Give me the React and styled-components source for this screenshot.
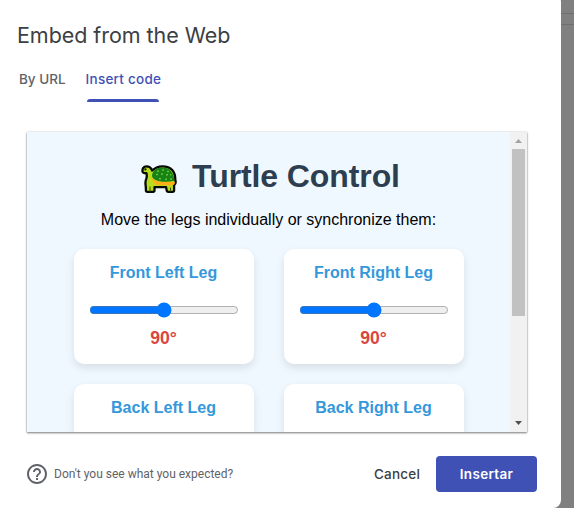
import React, { useState } from "react";
import styled, { createGlobalStyle } from "styled-components";

const GlobalStyle = createGlobalStyle`
  * { box-sizing: border-box; }
  body { margin: 0; overflow: hidden; }
`;

const Backdrop = styled.div`
  display: flex;
  width: 574px;
  height: 508px;
  overflow: hidden;
  background: linear-gradient(#808080 0 13px, #6f6f6f 13px 14px, #808080 14px 24px, #6f6f6f 24px 25px, #808080 25px);
`;

const Dialog = styled.section`
  display: flex;
  flex-direction: column;
  flex: none;
  width: 561px;
  height: 514px;
  margin-top: -6px;
  padding-top: 6px;
  background: #fff;
  border-radius: 0 8px 8px 0;
  font-family: Inter, "Liberation Sans", sans-serif;
`;

const DialogTitle = styled.h1`
  margin: 20px 0 0 17px;
  height: 30px;
  font-size: 21.5px;
  line-height: 30px;
  font-weight: 400;
  letter-spacing: -0.05px;
  color: #3c4043;
  white-space: nowrap;
`;

const TabBar = styled.nav`
  display: flex;
  gap: 20px;
  margin: 19px 0 0 19px;
  height: 33px;
`;

const Tab = styled.button`
  display: flex;
  flex-direction: column;
  justify-content: space-between;
  align-items: center;
  height: 33px;
  padding: 0;
  border: 0;
  background: none;
  font: 500 13.5px/20px Inter, sans-serif;
  letter-spacing: ${(p) => p.$tracking};
  white-space: nowrap;
  color: ${(p) => (p.$active ? "#3f51b5" : "#5f6368")};
`;

const TabIndicator = styled.span`
  width: 72px;
  height: 3px;
  margin-right: 1px;
  border-radius: 3px 3px 0 0;
  background: #3f51b5;
`;

const Preview = styled.div`
  display: flex;
  width: 500px;
  height: 300px;
  margin: 30px 0 0 27px;
  overflow: hidden;
  background: #f0f8ff;
  box-shadow: 0 1px 2px rgba(0, 0, 0, 0.5), 0 0 1px rgba(0, 0, 0, 0.25);
`;

const Page = styled.main`
  width: 483px;
  flex: none;
  display: flex;
  flex-direction: column;
  align-items: center;
  font-family: "Liberation Sans", Arial, sans-serif;
`;

const PageTitle = styled.h2`
  display: flex;
  align-items: center;
  gap: 15px;
  margin: 25px 0 0 4px;
  height: 38px;
  font-size: 32px;
  line-height: 38px;
  font-weight: 700;
  letter-spacing: -0.1px;
  color: #2c3e50;
  white-space: nowrap;

  svg { margin-top: 6px; }
`;

const Intro = styled.p`
  margin: 16px 0 0;
  font-size: 16px;
  line-height: 18px;
  color: #000;
`;

const LegGrid = styled.div`
  display: grid;
  grid-template-columns: 180px 180px;
  grid-auto-rows: 115px;
  gap: 20px 30px;
  margin-top: 20px;
`;

const LegCard = styled.article`
  display: flex;
  flex-direction: column;
  align-items: center;
  padding: 15px;
  border-radius: 10px;
  background: #fff;
  box-shadow: 0 4px 8px rgba(0, 0, 0, 0.1);
`;

const ClippedCard = styled(LegCard)`
  height: 48px;
  border-radius: 10px 10px 0 0;
`;

const LegName = styled.h3`
  margin: 0;
  font-size: 16px;
  line-height: 18px;
  color: #3498db;
`;

const AngleSlider = styled.input`
  width: 150px;
  height: 16px;
  margin: 20px 0 0;
`;

const Angle = styled.output`
  margin-top: 10px;
  font-size: 17.6px;
  line-height: 20px;
  font-weight: 700;
  color: #d9473f;
`;

const ScrollBar = styled.div`
  display: flex;
  flex-direction: column;
  align-items: center;
  justify-content: space-between;
  width: 17px;
  height: 300px;
  background: #f1f1f1;
`;

const ScrollUpper = styled.div`
  display: flex;
  flex-direction: column;
`;

const ScrollArrow = styled.svg`
  display: block;
  width: 17px;
  height: 17px;
  fill: ${(p) => (p.$enabled ? "#505050" : "#a3a3a3")};
`;

const ScrollThumb = styled.div`
  width: 13px;
  height: 167px;
  margin-left: 2px;
  background: #c1c1c1;
`;

const Footer = styled.footer`
  display: flex;
  align-items: center;
  height: 36px;
  margin: 24px 24px 0 26px;
`;

const HelpLink = styled.a`
  display: flex;
  align-items: center;
  gap: 6px;
  flex: 1;
  font: 400 12px/16px Roboto, sans-serif;
  color: #5f6368;
  white-space: nowrap;
`;

const CancelButton = styled.button`
  padding: 0;
  margin-right: 16px;
  border: 0;
  background: none;
  font: 500 13.5px/20px Inter, sans-serif;
  letter-spacing: 0.2px;
  color: #3c4043;
`;

const InsertButton = styled.button`
  width: 101px;
  height: 36px;
  padding: 0;
  border: 0;
  border-radius: 4px;
  background: #3f51b5;
  font: 600 13.5px/20px Inter, sans-serif;
  letter-spacing: 0.3px;
  color: #fff;
`;

function Turtle() {
  return (
    <svg width="36" height="29" viewBox="0 0 36 29">
      <path d="M5.4 1.4C2.6 1.4 1.4 3.4 1.4 6c0 1.6 1.4 2.3 4 2.2.6 2 .5 3.6 0 5.2-.9 2-1.2 4.2-.8 6.6.3 2 .3 4 .3 5.6 0 .8.6 1.2 1.6 1.2h5.6c1 0 1.4-.6 1.4-1.6v-3h11.6l.6 3.4c.2.8.8 1.2 1.6 1.2h4.2c1 0 1.6-.6 1.6-1.6v-5c1.5-1.2 1.9-3 1.2-5C34.6 6.6 30 1.3 21.6 1.3c-4.6 0-8 1.6-10.4 4.3C10.2 3 8.2 1.4 5.4 1.4z" fill="#b9dc1f" stroke="#050a03" strokeWidth="2.3" strokeLinejoin="round" />
      <path d="M11 10.4C11.6 5.6 15.6 2.5 21.4 2.5c7.4 0 11.4 4.6 12 13.3-6 1.4-14 1.2-18.4-.6-2.6-1.2-4-2.6-4-4.8z" fill="#178317" />
      <path d="M10.6 11.5c2 4.2 7 5.6 12 5.6h11.2c.4 2-.6 3.2-2.6 3.2H19c-4.4 0-8-3.8-8.4-8.8z" fill="#ffad16" />
      <path d="M16 6.2h2m3-1.2h2m3 1.6h2m-13 3h2m3-.6h2m3 .8h2m2 0h1.4m-12.4 4h2m4 .4h2m3-.2h2" stroke="#65c335" strokeWidth="1.5" />
      <path d="M9 21.5v5M29.5 22.5v4" fill="none" stroke="#3d530b" strokeWidth="1" />
      <circle cx="4.4" cy="4.4" r="1.1" fill="#111" />
    </svg>
  );
}

function HelpIcon() {
  return (
    <svg width="22" height="22" viewBox="1 1 22 22" fill="#5f6368">
      <path d="M11 18h2v-2h-2v2zm1-16C6.48 2 2 6.48 2 12s4.48 10 10 10 10-4.48 10-10S17.52 2 12 2zm0 18c-4.41 0-8-3.59-8-8s3.59-8 8-8 8 3.59 8 8-3.59 8-8 8zm0-14c-2.21 0-4 1.79-4 4h2c0-1.1.9-2 2-2s2 .9 2 2c0 2-3 1.75-3 5h2c0-2.25 3-2.5 3-5 0-2.21-1.79-4-4-4z" />
    </svg>
  );
}

function Leg({ name }) {
  const [angle, setAngle] = useState(90);
  return (
    <LegCard>
      <LegName>{name}</LegName>
      <AngleSlider type="range" min="0" max="180" value={angle} aria-label={name} onChange={(e) => setAngle(e.target.value)} />
      <Angle>{angle}°</Angle>
    </LegCard>
  );
}

const topLegs = ["Front Left Leg", "Front Right Leg"];
const bottomLegs = ["Back Left Leg", "Back Right Leg"];

export default function App() {
  return (
    <Backdrop>
      <GlobalStyle />
      <Dialog>
        <DialogTitle>Embed from the Web</DialogTitle>
        <TabBar>
          <Tab $tracking="0px">By URL</Tab>
          <Tab $active $tracking="0.25px">Insert code<TabIndicator /></Tab>
        </TabBar>
        <Preview>
          <Page>
            <PageTitle><Turtle />Turtle Control</PageTitle>
            <Intro>Move the legs individually or synchronize them:</Intro>
            <LegGrid>
              {topLegs.map((name) => <Leg key={name} name={name} />)}
              {bottomLegs.map((name) => <ClippedCard key={name}><LegName>{name}</LegName></ClippedCard>)}
            </LegGrid>
          </Page>
          <ScrollBar>
            <ScrollUpper>
              <ScrollArrow viewBox="0 0 17 17"><path d="M5 11h7L8.5 7z" /></ScrollArrow>
              <ScrollThumb />
            </ScrollUpper>
            <ScrollArrow $enabled viewBox="0 0 17 17"><path d="M5 6h7l-3.5 4z" /></ScrollArrow>
          </ScrollBar>
        </Preview>
        <Footer>
          <HelpLink><HelpIcon />Don't you see what you expected?</HelpLink>
          <CancelButton>Cancel</CancelButton>
          <InsertButton>Insertar</InsertButton>
        </Footer>
      </Dialog>
    </Backdrop>
  );
}
